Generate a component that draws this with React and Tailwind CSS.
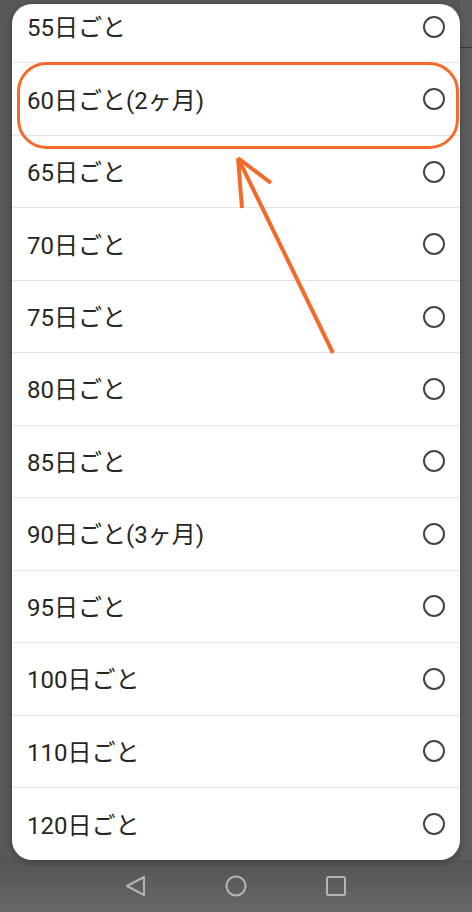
import React from "react";

const items = [
  "55日ごと",
  "60日ごと(2ヶ月)",
  "65日ごと",
  "70日ごと",
  "75日ごと",
  "80日ごと",
  "85日ごと",
  "90日ごと(3ヶ月)",
  "95日ごと",
  "100日ごと",
  "110日ごと",
  "120日ごと",
];

export default function App() {
  return (
    <div
      className="relative flex h-[912px] w-full flex-col overflow-hidden bg-[#575757]"
      style={{ fontFamily: "Roboto, 'Noto Sans CJK JP', sans-serif" }}
    >
      <div className="relative flex min-h-0 flex-1 px-3 pt-1">
        <div className="pointer-events-none absolute right-0 top-0 h-full w-3 bg-[#5c5c5c]">
          <div className="mt-[47px] h-[1px] w-full bg-[#3a3a3a]" />
        </div>
        <div className="relative z-10 flex-1 overflow-hidden rounded-[20px] bg-white shadow-[0_2px_6px_rgba(0,0,0,0.25)]">
          <ul className="mt-[-13px]">
            {items.map((t, i) => (
              <li
                key={t}
                className={`flex h-[72.46px] items-center justify-between pl-[15px] pr-[15px] ${
                  i < items.length - 1 ? "border-b border-[#e2e2e2]" : ""
                }`}
              >
                <span className="pt-[3px] text-[24px] font-normal leading-none text-[#262626]">{t}</span>
                <span className="h-[22px] w-[22px] rounded-full border-2 border-[#444444]" />
              </li>
            ))}
          </ul>
        </div>
      </div>
      <div className="flex h-[52px] items-center justify-center gap-[76px] bg-gradient-to-b from-[#545454] to-[#686868]">
        <svg width="24" height="24" viewBox="0 0 24 24" className="text-[#b4b4b4]">
          <path d="M3 12 L20 3 L20 21 Z" fill="none" stroke="currentColor" strokeWidth="2" strokeLinejoin="round" />
        </svg>
        <svg width="24" height="24" viewBox="0 0 24 24" className="text-[#b4b4b4]">
          <circle cx="12" cy="12" r="9.5" fill="none" stroke="currentColor" strokeWidth="2" />
        </svg>
        <svg width="24" height="24" viewBox="0 0 24 24" className="text-[#b4b4b4]">
          <rect x="3" y="3" width="18" height="18" rx="1.5" fill="none" stroke="currentColor" strokeWidth="2" />
        </svg>
      </div>
      <svg
        className="pointer-events-none absolute left-0 top-0 z-20"
        width="472"
        height="912"
        viewBox="0 0 472 912"
      >
        <rect x="18.5" y="63.5" width="439" height="84" rx="28" fill="none" stroke="#f26b2a" strokeWidth="3" />
        <path
          d="M333 353 L238 158 M238 158 L242 208 M238 158 L271 183"
          fill="none"
          stroke="#f26b2a"
          strokeWidth="4"
          strokeLinecap="butt"
        />
      </svg>
    </div>
  );
}
